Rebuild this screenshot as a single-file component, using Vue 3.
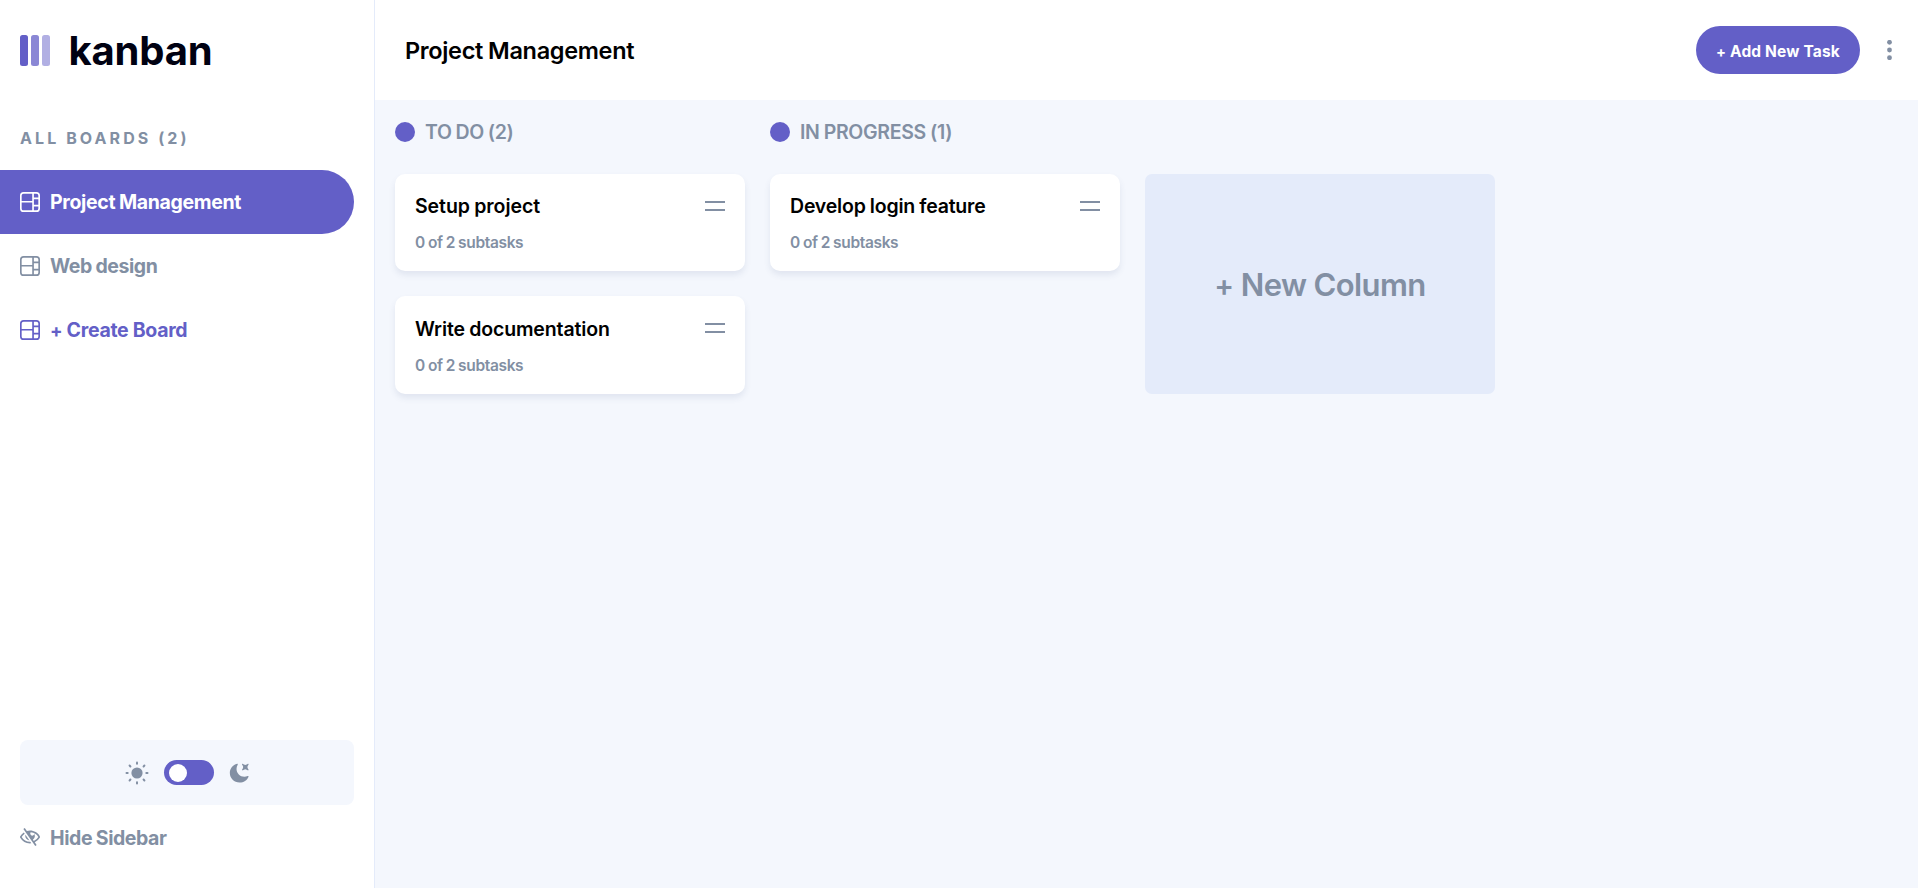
<script setup>
const boards = [
  { name: 'Project Management', active: true, cls: 'w-pm' },
  { name: 'Web design', active: false, cls: 'w-web' },
]
const columns = [
  {
    title: 'TO DO (2)',
    cls: 'w-todo',
    tasks: [
      { name: 'Setup project', cls: 'w-setup' },
      { name: 'Write documentation', cls: 'w-write' },
    ],
  },
  {
    title: 'IN PROGRESS (1)',
    cls: 'w-prog',
    tasks: [{ name: 'Develop login feature', cls: 'w-dev' }],
  },
]
const rays = [0, 45, 90, 135, 180, 225, 270, 315]
const boardIcon =
  'M0 2.889A2.889 2.889 0 0 1 2.889 0H13.11A2.889 2.889 0 0 1 16 2.889V13.11A2.888 2.888 0 0 1 13.111 16H2.89A2.889 2.889 0 0 1 0 13.111V2.89Zm1.333 5.555v4.667c0 .859.697 1.556 1.556 1.556h6.889V8.444H1.333Zm8.445-1.333V1.333h-6.89A1.556 1.556 0 0 0 1.334 2.89V7.11h8.445Zm4.889-1.333H11.11v4.444h3.556V5.778Zm0 5.778H11.11v3.11h2a1.556 1.556 0 0 0 1.556-1.555v-1.555Zm0-7.112V2.89a1.555 1.555 0 0 0-1.556-1.556h-2v3.111h3.556Z'
</script>

<template>
  <div class="app">
    <aside class="sidebar">
      <div class="logo">
        <svg class="bars" width="30" height="31" viewBox="0 0 30 31">
          <rect width="8" height="31" rx="2.5" />
          <rect x="11" width="8" height="31" rx="2.5" opacity=".75" />
          <rect x="22" width="8" height="31" rx="2.5" opacity=".5" />
        </svg>
        <span class="word">kanban</span>
      </div>
      <h2 class="label">ALL BOARDS (2)</h2>
      <nav class="boards">
        <a v-for="b in boards" :key="b.name" class="item" :class="{ active: b.active }">
          <svg class="icon" width="20" height="20" viewBox="0 0 16 16"><path :d="boardIcon" /></svg>
          <span :class="b.cls">{{ b.name }}</span>
        </a>
        <a class="item create">
          <svg class="icon" width="20" height="20" viewBox="0 0 16 16"><path :d="boardIcon" /></svg>
          <span class="w-create"><span class="plus">+</span> Create Board</span>
        </a>
      </nav>
      <div class="theme">
        <svg class="sun" width="24" height="24" viewBox="-12 -12 24 24">
          <circle r="5.6" />
          <rect v-for="r in rays" :key="r" x="-1" y="-11.5" width="2" height="3.2" rx="1" :transform="`rotate(${r})`" />
        </svg>
        <span class="toggle"><span class="knob"></span></span>
        <svg class="moon" width="20" height="20" viewBox="0 0 16 16">
          <path d="M6.474.682c.434-.11.718.406.481.78A6.067 6.067 0 0 0 6.01 4.72c0 3.418 2.827 6.187 6.314 6.187.89.002 1.77-.182 2.584-.54.408-.18.894.165.724.57-1.16 2.775-3.944 4.73-7.194 4.73-4.292 0-7.771-3.41-7.771-7.615 0-3.541 2.466-6.518 5.807-7.37Zm8.433.07c.442-.294.969.232.674.674l-.525.787a1.943 1.943 0 0 0 0 2.157l.525.788c.295.441-.232.968-.674.673l-.787-.525a1.943 1.943 0 0 0-2.157 0l-.786.525c-.442.295-.97-.232-.675-.673l.525-.788a1.943 1.943 0 0 0 0-2.157l-.525-.787c-.295-.442.232-.968.674-.673l.787.525a1.943 1.943 0 0 0 2.157 0l.787-.525Z" />
        </svg>
      </div>
      <a class="item hide">
        <svg class="icon" width="20" height="18" viewBox="0 0 18 16">
          <path d="M8.522 11.223a4.252 4.252 0 0 1-3.654-5.22l3.654 5.22ZM9 12.25A8.685 8.685 0 0 1 1.5 8a8.612 8.612 0 0 1 2.76-2.864l-.86-1.23A10.112 10.112 0 0 0 .208 7.238a1.5 1.5 0 0 0 0 1.524A10.187 10.187 0 0 0 9 13.75c.414 0 .828-.025 1.239-.074l-1-1.43A8.88 8.88 0 0 1 9 12.25Zm8.792-3.488a10.14 10.14 0 0 1-4.486 4.046l1.504 2.148a.375.375 0 0 1-.092.523l-.648.453a.375.375 0 0 1-.523-.092L3.19 1.044A.375.375 0 0 1 3.282.52L3.93.068a.375.375 0 0 1 .523.092l1.735 2.479A10.308 10.308 0 0 1 9 2.25c3.746 0 7.031 2 8.792 4.988a1.5 1.5 0 0 1 0 1.524ZM16.5 8a8.674 8.674 0 0 0-6.755-4.219A1.75 1.75 0 1 0 12.75 5v-.001a4.25 4.25 0 0 1-1.154 5.366l.834 1.192A8.641 8.641 0 0 0 16.5 8Z" />
        </svg>
        <span class="w-hide">Hide Sidebar</span>
      </a>
    </aside>
    <main class="main">
      <header class="header">
        <h1 class="title">Project Management</h1>
        <button class="add"><span class="plus">+</span> Add New Task</button>
        <svg class="dots" width="5" height="20" viewBox="0 0 5 20"><circle cx="2.5" cy="2.3" r="2.4" /><circle cx="2.5" cy="10" r="2.4" /><circle cx="2.5" cy="17.7" r="2.4" /></svg>
      </header>
      <div class="board">
        <section v-for="col in columns" :key="col.title" class="column">
          <h3 class="head"><span class="dot"></span><span :class="col.cls">{{ col.title }}</span></h3>
          <article v-for="t in col.tasks" :key="t.name" class="card">
            <div class="row"><span class="name" :class="t.cls">{{ t.name }}</span><span class="grip"></span></div>
            <p class="sub">0 of 2 subtasks</p>
          </article>
        </section>
        <button class="new"><span class="plus">+</span> New Column</button>
      </div>
    </main>
  </div>
</template>

<style>
body { margin: 0; overflow: hidden; }
</style>

<style scoped>
.app { display: flex; width: 100vw; height: 888px; background: #f4f7fd; font-family: Inter, "Open Sans", sans-serif; color: #000; }
.sidebar { box-sizing: border-box; width: 375px; height: 888px; display: flex; flex-direction: column; background: #fff; border-right: 1px solid #e4ebfa; color: #828fa3; }
svg { fill: currentColor; flex: none; display: block; }
.plus { font-size: .95em; line-height: 0; }
.logo { display: flex; align-items: center; height: 31px; margin: 35px 0 0 20px; }
.bars { color: #635fc7; }
.word { margin-left: 18.5px; font-size: 40px; line-height: 31px; font-weight: 700; color: #000112; letter-spacing: -.2px; }
.label { margin: 62px 0 0 20px; font-size: 16px; line-height: 20px; font-weight: 700; letter-spacing: 3.08px; }
.boards { margin-top: 22px; flex: 1; }
.item { display: flex; align-items: center; gap: 10px; box-sizing: border-box; height: 64px; width: 354px; padding-left: 20px; font-size: 19.5px; font-weight: 700; white-space: nowrap; word-spacing: -.5px; }
.item.active { background: #635fc7; color: #fff; border-radius: 0 32px 32px 0; }
.item.create { color: #635fc7; word-spacing: 0; }
.w-pm { letter-spacing: -.34px; }
.w-web { letter-spacing: -.45px; }
.w-create { letter-spacing: -.3px; }
.w-hide { letter-spacing: -.42px; padding-top: 2px; }
.w-todo { letter-spacing: -.38px; }
.w-prog { letter-spacing: -.31px; }
.w-setup { letter-spacing: -.06px; }
.w-write { letter-spacing: -.13px; }
.w-dev { letter-spacing: -.2px; }
.theme { display: flex; align-items: center; justify-content: center; width: 334px; height: 65px; margin-left: 20px; border-radius: 8px; background: #f4f7fd; gap: 15px; }
.sun { margin: 0 0 0 -1px; }
.toggle { width: 50px; height: 25px; border-radius: 13px; background: #635fc7; }
.knob { display: block; width: 18px; height: 18px; margin: 4px 0 0 5px; border-radius: 50%; background: #fff; }
.hide { margin-bottom: 19px; }
.main { flex: 1; }
.header { box-sizing: border-box; height: 100px; display: flex; align-items: center; padding: 0 26px 0 30px; background: #fff; }
.title { margin: 0; flex: 1; font-size: 23.5px; font-weight: 600; letter-spacing: -.33px; word-spacing: -.5px; }
.add { width: 164px; height: 48px; padding: 2px 0 0; border: 0; border-radius: 24px; background: #635fc7; color: #fff; font: 700 15.5px Inter, sans-serif; letter-spacing: .15px; white-space: nowrap; }
.dots { margin-left: 27px; color: #828fa3; }
.board { display: flex; gap: 25px; padding: 22px 20px; }
.column { width: 350px; }
.head { display: flex; align-items: center; gap: 10px; height: 20px; margin: 0 0 32px; font-size: 19.5px; font-weight: 600; color: #828fa3; word-spacing: -.5px; }
.dot { width: 20px; height: 20px; border-radius: 50%; background: #635fc7; }
.card { box-sizing: border-box; height: 97.3px; margin-bottom: 25px; padding: 20.3px 20px 0; border-radius: 10px; background: #fff; box-shadow: 0 4px 6px rgba(54, 78, 126, .1); word-spacing: -.5px; }
.row { display: flex; justify-content: space-between; height: 25px; }
.name { font-size: 19.5px; line-height: 25px; font-weight: 600; }
.grip { width: 20px; height: 4px; margin-top: 6.7px; border-top: 2px solid #828fa3; border-bottom: 2px solid #828fa3; padding-top: 2px; }
.sub { margin: 14px 0 0; font-size: 15.5px; line-height: 20px; font-weight: 600; color: #828fa3; letter-spacing: -.35px; }
.new { width: 350px; height: 220px; margin-top: 52px; padding: 0; border: 0; border-radius: 7px; background: #e4ebfa; color: #828fa3; font: 600 31px Inter, sans-serif; letter-spacing: -.6px; }
</style>
